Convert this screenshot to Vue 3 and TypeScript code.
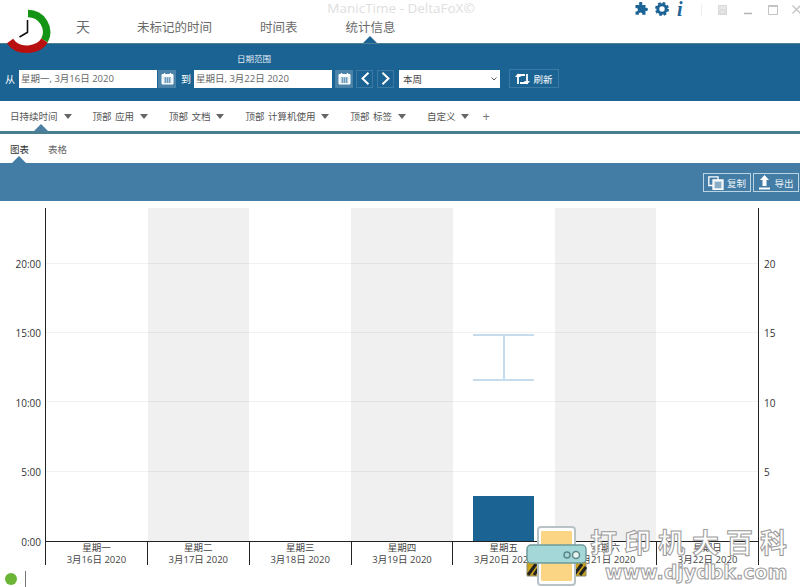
<script setup lang="ts">
const navTabs = ['天', '未标记的时间', '时间表', '统计信息'];
const filterTabs = ['日持续时间', '顶部 应用', '顶部 文档', '顶部 计算机使用', '顶部 标签', '自定义'];

const days = [
  { week: '星期一', date: '3月16日 2020' },
  { week: '星期二', date: '3月17日 2020' },
  { week: '星期三', date: '3月18日 2020' },
  { week: '星期四', date: '3月19日 2020' },
  { week: '星期五', date: '3月20日 2020' },
  { week: '星期六', date: '3月21日 2020' },
  { week: '星期日', date: '3月22日 2020' },
];

const maxHours = 24;
const ticks = [0, 5, 10, 15, 20];

// percent of the plot height measured from the baseline
const pct = (hours: number) => `${(hours / maxHours) * 100}%`;
</script>

<template>
  <div class="app">
    <div class="logo">
      <svg width="50" height="50" viewBox="0 0 50 50">
        <circle cx="25" cy="25" r="19" fill="#fff" />
        <path d="M25 6.5 A18.5 18.5 0 0 1 41.5 33.5" fill="none" stroke="#149414" stroke-width="7.5" />
        <path d="M41.5 33.5 C36 43 16 47 7 34" fill="none" stroke="#b81010" stroke-width="7.5" />
        <path d="M24.5 25 V13 M25 25 L16.5 30" fill="none" stroke="#111" stroke-width="1.6" />
      </svg>
    </div>

    <header class="top">
      <div class="title">ManicTime - DeltaFoX©</div>
      <nav class="nav">
        <span v-for="(tab, i) in navTabs" :key="tab" class="nav-tab" :class="{ big: i === 0 }">{{ tab }}</span>
        <i class="notch notch-nav"></i>
      </nav>
      <div class="top-icons">
        <svg width="14" height="14" viewBox="0 0 14 14">
          <path d="M5 1.5 a1.7 1.7 0 0 1 3.4 0 q0 .8 -.4 1.5 h3.5 v3 q.8 -.5 1.3 -.2 a1.7 1.7 0 0 1 0 3.2 q-.6 .2 -1.3 -.2 v4 h-3.5 q.5 -.9 0 -1.5 a1.8 1.8 0 0 0 -3 0 q-.4 .6 0 1.5 h-3.5 v-3.5 q.9 .4 1.5 0 a1.7 1.7 0 0 0 0 -3 q-.6 -.4 -1.5 0 v-3.3 h3.9 q-.4 -.7 -.4 -1.5z" fill="#1d6496" />
        </svg>
        <svg class="gear" width="14" height="14" viewBox="0 0 14 14">
          <circle cx="7" cy="7" r="4.2" fill="none" stroke="#1d6496" stroke-width="3" />
          <circle cx="7" cy="7" r="6" fill="none" stroke="#1d6496" stroke-width="2" stroke-dasharray="2.7 2" />
        </svg>
        <span class="info">i</span>
        <span class="sep"></span>
        <svg class="win" width="9" height="10" viewBox="0 0 9 10">
          <path d="M.5 .5 H8.5 V9.5 H.5z M2 5 H7 V9 H2z" fill="#e6e6e6" stroke="#d8d8d8" />
        </svg>
        <svg class="win win-min" width="8" height="10" viewBox="0 0 8 10">
          <path d="M0 8.5 H8" stroke="#b4b4b4" stroke-width="1.5" />
        </svg>
        <svg class="win win-max" width="10" height="10" viewBox="0 0 10 10">
          <path d="M.5 1 H9.5 V9.5 H.5z" fill="none" stroke="#c4c4c4" />
          <path d="M0 1 H10" stroke="#c4c4c4" stroke-width="2" />
        </svg>
        <svg class="win win-close" width="9" height="9" viewBox="0 0 9 9">
          <path d="M.5 .5 L8.5 8.5 M8.500 .5 L.5 8.5" stroke="#c4c4c4" stroke-width="1.3" />
        </svg>
      </div>
    </header>

    <section class="range">
      <div class="range-title">日期范围</div>
      <div class="range-row">
        <label class="from">从</label>
        <div class="date-input">星期一, 3月16日 2020</div>
        <button class="cal">
          <svg width="13" height="13" viewBox="0 0 13 13">
            <path d="M1 2.5 H12 V12 H1z" fill="#eaf2f7" stroke="#fff" />
            <path d="M1 2 H12 V4.5 H1z" fill="#fff" />
            <path d="M3.5 1 V3 M9.5 1 V3" stroke="#fff" stroke-width="1.4" />
            <path d="M3 6 H10 M3 8 H10 M3 10 H10 M4.5 5.5 V11 M6.5 5.5 V11 M8.5 5.5 V11" stroke="#5c8fb2" stroke-width=".8" />
          </svg>
        </button>
        <label class="to">到</label>
        <div class="date-input">星期日, 3月22日 2020</div>
        <button class="cal cal-second">
          <svg width="13" height="13" viewBox="0 0 13 13">
            <path d="M1 2.5 H12 V12 H1z" fill="#eaf2f7" stroke="#fff" />
            <path d="M1 2 H12 V4.5 H1z" fill="#fff" />
            <path d="M3.5 1 V3 M9.5 1 V3" stroke="#fff" stroke-width="1.4" />
            <path d="M3 6 H10 M3 8 H10 M3 10 H10 M4.5 5.5 V11 M6.5 5.5 V11 M8.5 5.5 V11" stroke="#5c8fb2" stroke-width=".8" />
          </svg>
        </button>
        <button class="arrow">
          <svg width="10" height="13" viewBox="0 0 10 13"><path d="M8.5 .8 L2.5 6.5 L8.5 12.2" fill="none" stroke="#fff" stroke-width="2" /></svg>
        </button>
        <button class="arrow arrow-next">
          <svg width="10" height="13" viewBox="0 0 10 13"><path d="M1.5 .8 L7.5 6.5 L1.5 12.2" fill="none" stroke="#fff" stroke-width="2" /></svg>
        </button>
        <div class="select">
          <span>本周</span>
          <svg width="6" height="4" viewBox="0 0 6 4"><path d="M.5 .5 L3 3 L5.5 .5" fill="none" stroke="#555" /></svg>
        </div>
        <button class="refresh">
          <svg width="15" height="12" viewBox="0 0 15 12">
            <path d="M3 11 V2 H10 M12 1 V10 H5" fill="none" stroke="#fff" stroke-width="1.8" />
            <path d="M0 4 L3 .5 L6 4z M9 8 L12 11.5 L15 8z" fill="#fff" />
          </svg>
          <span>刷新</span>
        </button>
      </div>
    </section>

    <div class="filters">
      <span v-for="tab in filterTabs" :key="tab" class="filter">
        {{ tab }}
        <i class="caret"></i>
      </span>
      <span class="plus">+</span>
      <i class="notch notch-filter"></i>
    </div>

    <div class="views">
      <span class="view active">图表</span>
      <span class="view">表格</span>
      <i class="notch notch-view"></i>
    </div>

    <div class="toolbar">
      <button class="tool tool-copy">
        <svg width="16" height="14" viewBox="0 0 16 14">
          <path d="M.8 .8 H10 V9.5 H.8z" fill="none" stroke="#fff" stroke-width="1.3" />
          <path d="M5 4 H15 V13.3 H5z" fill="#cfe0ea" stroke="#fff" stroke-width="1.3" />
          <path d="M7 7 H13 M7 9 H13 M7 11 H13" stroke="#43799f" />
        </svg>
        <span>复制</span>
      </button>
      <button class="tool tool-export">
        <svg width="13" height="15" viewBox="0 0 13 15">
          <path d="M6.5 0 L11 5 H8.5 V11 H4.5 V5 H2z" fill="#fff" />
          <path d="M1 12.5 H12 V14.5 H1z" fill="#fff" />
        </svg>
        <span>导出</span>
      </button>
    </div>

    <main class="chart">
      <div class="chart-body">
        <div class="axis-left">
          <span v-for="t in ticks" :key="t" class="y-label" :style="{ bottom: pct(t) }">{{ t }}:00</span>
        </div>
        <div class="plot">
          <div v-for="(d, i) in days" :key="d.date" class="day" :class="{ shaded: i % 2 === 1 }"></div>
          <i v-for="t in ticks.slice(1)" :key="t" class="grid-line" :style="{ bottom: pct(t) }"></i>
          <div class="range-bar" :style="{ bottom: pct(11.55), height: pct(3.4) }"><i class="stem"></i></div>
          <div class="bar" :style="{ height: pct(3.25) }"></div>
        </div>
        <div class="axis-right">
          <span v-for="t in ticks" :key="t" class="y-label-right" :style="{ bottom: pct(t) }">{{ t }}</span>
        </div>
      </div>
      <div class="x-axis">
        <div v-for="d in days" :key="d.date" class="x-label">
          <span>{{ d.week }}</span>
          <span>{{ d.date }}</span>
        </div>
      </div>
    </main>

    <footer class="status">
      <i class="dot"></i>
      <i class="status-line"></i>
    </footer>

    <!-- site watermark stamped over the corner of the screenshot -->
    <div class="watermark">
      <svg class="printer" width="61" height="60" viewBox="0 0 61 60">
        <path d="M1 36 H60 V50 H1z" fill="#c9a21c" stroke="#8a8a70" />
        <path d="M2 49 L10 38 M8 49 L14 40 M48 49 L56 38 M54 49 L60 41" stroke="#222" stroke-width="3" />
        <rect x="12" y="1" width="37" height="58" rx="3" fill="#fff" stroke="#b9c3c6" stroke-width="2" />
        <rect x="15" y="5" width="31" height="50" rx="1" fill="#fbd583" />
        <rect x="1" y="19" width="59" height="18" rx="4" fill="#a4d8d8" stroke="#6f9a9c" stroke-width="1.5" />
        <circle cx="41" cy="29" r="3" fill="none" stroke="#5d8688" stroke-width="1.5" />
        <circle cx="50" cy="29" r="3.5" fill="#e8f4f4" stroke="#5d8688" stroke-width="1.5" />
      </svg>
      <div class="wm-text">
        <div class="wm-title">打印机大百科</div>
        <div class="wm-url">www.djydbk.com</div>
      </div>
    </div>
  </div>
</template>

<style scoped>
.app {
  position: relative;
  width: 800px;
  height: 587px;
  overflow: hidden;
  background: #fff;
  color: #333;
  font-family: "Open Sans", "Noto Sans CJK SC", sans-serif;
  font-size: 9.5px;
}

button {
  display: flex;
  align-items: center;
  justify-content: center;
  padding: 0;
  border: 1px solid transparent;
  background: none;
  color: #fff;
  font: inherit;
}

.logo {
  position: absolute;
  left: 3px;
  top: 7px;
  z-index: 2;
  width: 50px;
  height: 50px;
}

.top {
  position: relative;
  height: 43px;
  border-bottom: 1px solid #4d8093;
}

.title {
  position: absolute;
  left: 0;
  right: 0;
  top: 0;
  padding-left: 2px;
  text-align: center;
  font-size: 13.5px;
  line-height: 16px;
  color: #dedede;
}

.nav {
  display: flex;
  align-items: center;
  gap: 48px;
  height: 100%;
  padding: 9px 0 0 76px;
  box-sizing: border-box;
}

.nav-tab {
  font-size: 12.5px;
  color: #6a6a6a;
}

.nav-tab.big {
  margin-right: -1px;
  font-size: 14px;
}

.notch {
  position: absolute;
  width: 0;
  height: 0;
  border-style: solid;
  border-width: 0 7px 7px;
  border-color: transparent;
}

.notch-nav {
  left: 363px;
  bottom: 0;
  border-bottom-color: #1b6393;
}

.top-icons {
  position: absolute;
  top: 2px;
  left: 634px;
  display: flex;
  align-items: flex-start;
}

.gear {
  margin-left: 7px;
}

.info {
  width: 10px;
  margin-left: 8px;
  font: italic bold 20px/15px "Liberation Serif", serif;
  color: #1d6496;
}

.sep {
  width: 1px;
  height: 12px;
  margin: 2px 0 0 14px;
  background: #eee;
}

.win {
  margin-top: 3px;
  margin-left: 16px;
}

.win-min {
  margin-left: 17px;
}

.win-max {
  margin-left: 16px;
}

.win-close {
  margin-left: 14px;
}

.range {
  height: 57px;
  box-sizing: border-box;
  padding-top: 9px;
  background: #1b6393;
  color: #fff;
}

.range-title {
  padding-left: 237px;
  font-size: 8.5px;
  line-height: 12px;
  color: #e6eff5;
}

.range-row {
  display: flex;
  align-items: center;
  height: 19px;
  margin-top: 4px;
  padding-left: 5px;
}

.from {
  width: 14px;
  font-size: 10px;
}

.to {
  width: 13px;
  margin-left: 5px;
  font-size: 10px;
}

.date-input {
  width: 138px;
  height: 18px;
  padding-left: 2px;
  box-sizing: border-box;
  background: #fff;
  color: #666;
  font-size: 9.5px;
  line-height: 18px;
}

.cal {
  width: 18px;
  height: 18px;
  margin-left: 1px;
  background: #4b82a8;
}

.cal-second {
  margin-left: 3px;
}

.arrow {
  width: 17px;
  height: 18px;
  margin-left: 3px;
  border-color: #3a7aa5;
}

.arrow-next {
  margin-left: 4px;
}

.select {
  display: flex;
  align-items: center;
  justify-content: space-between;
  width: 101px;
  height: 18px;
  margin-left: 5px;
  padding: 0 3px 0 4px;
  box-sizing: border-box;
  background: #fff;
  color: #444;
}

.refresh {
  gap: 3px;
  width: 50px;
  height: 19px;
  margin-left: 9px;
  border-color: #3a7aa5;
  font-size: 9.5px;
}

.filters {
  position: relative;
  display: flex;
  align-items: center;
  gap: 21px;
  height: 30px;
  padding: 0 0 0 10px;
  box-sizing: border-box;
  color: #555;
  word-spacing: 1px;
}

.filter {
  display: flex;
  align-items: center;
  gap: 6px;
}

.caret {
  width: 0;
  height: 0;
  border-style: solid;
  border-width: 5px 4.5px 0;
  border-color: #666 transparent transparent;
}

.plus {
  margin-left: -8px;
  font-size: 13px;
  color: #777;
}

.notch-filter {
  left: 34px;
  bottom: 0;
  border-bottom-color: #4d7fa3;
}

.views {
  position: relative;
  display: flex;
  align-items: center;
  gap: 19px;
  height: 29px;
  padding-left: 10px;
  border-top: 3px solid #4a7f92;
  color: #666;
}

.view.active {
  color: #333;
}

.notch-view {
  left: 12px;
  bottom: 0;
  border-bottom-color: #437da6;
}

.toolbar {
  display: flex;
  justify-content: flex-end;
  gap: 2px;
  height: 38px;
  box-sizing: border-box;
  padding: 10px 1px 0 0;
  background: #437da6;
}

.tool {
  gap: 3px;
  height: 19px;
  border-color: #bcd3e2;
  color: #e8f0f5;
}

.tool-copy {
  width: 48px;
}

.tool-export {
  width: 46px;
}

.chart {
  height: 364px;
  padding-top: 7px;
  box-sizing: border-box;
}

.chart-body {
  display: flex;
  height: 334px;
}

.axis-left {
  position: relative;
  width: 45px;
  color: #333;
}

.y-label {
  position: absolute;
  right: 4px;
  line-height: 12px;
  transform: translateY(5.5px);
  font-size: 10px;
}

.plot {
  position: relative;
  display: flex;
  width: 714px;
  box-sizing: border-box;
  border-left: 1px solid #222;
  border-right: 1px solid #222;
  border-bottom: 1px solid #222;
}

.day {
  flex: 1;
}

.day.shaded {
  background: #f0f0f0;
}

.grid-line {
  position: absolute;
  left: 0;
  right: 0;
  height: 1px;
  background: rgba(0, 0, 0, 0.05);
}

.range-bar {
  position: absolute;
  left: 427px;
  width: 61px;
  box-sizing: border-box;
  border-top: 2px solid #c6dcec;
  border-bottom: 2px solid #c6dcec;
}

.stem {
  position: absolute;
  left: 29.5px;
  top: 0;
  bottom: 0;
  width: 2px;
  background: #c6dcec;
}

.bar {
  position: absolute;
  left: 427px;
  bottom: 0;
  width: 61px;
  background: #1b6393;
}

.axis-right {
  position: relative;
  flex: 1;
}

.y-label-right {
  position: absolute;
  left: 5px;
  line-height: 12px;
  transform: translateY(5.5px);
  font-size: 10px;
}

.x-axis {
  display: flex;
  width: 714px;
  height: 23px;
  margin-left: 45px;
  box-sizing: border-box;
  border-right: 1px solid #222;
}

.x-label {
  display: flex;
  flex: 1;
  flex-direction: column;
  align-items: center;
  border-left: 1px solid #222;
  font-size: 9.5px;
  line-height: 12px;
  color: #444;
}

.status {
  position: relative;
  display: flex;
  align-items: center;
  height: 22px;
  padding-left: 5px;
}

.dot {
  width: 12px;
  height: 12px;
  margin-top: 6px;
  border-radius: 50%;
  background: #6ab536;
}

.status-line {
  width: 1px;
  height: 16px;
  margin: 6px 0 0 8px;
  background: #777;
}

.watermark {
  position: absolute;
  left: 526px;
  top: 526px;
  display: flex;
  gap: 3px;
}

.wm-text {
  font-family: "Noto Sans CJK SC", sans-serif;
  color: #fff;
  -webkit-text-stroke: 1px #9a9a9a;
}

.wm-title {
  font-size: 27px;
  line-height: 32px;
  font-weight: 700;
  letter-spacing: 7px;
  white-space: nowrap;
}

.wm-url {
  margin-top: 3px;
  padding-left: 15px;
  font-family: "DejaVu Sans", sans-serif;
  font-size: 19px;
  line-height: 22px;
  font-weight: 700;
  letter-spacing: 0;
  white-space: nowrap;
}
</style>
